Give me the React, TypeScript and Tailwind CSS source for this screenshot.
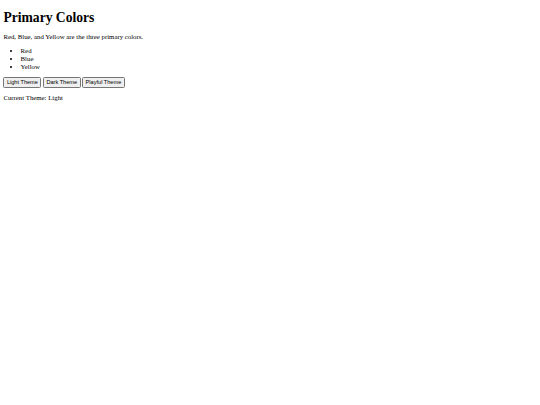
import React, { useState } from 'react';

const colors = ['Red', 'Blue', 'Yellow'];
const themes = ['Light', 'Dark', 'Playful'];

export default function App() {
  const [theme, setTheme] = useState('Light');

  return (
    <div className="min-h-[405px] bg-white p-[3.4px] text-black" style={{ fontFamily: '"Liberation Serif", serif' }}>
      <h1 className="mt-[6.6px] mb-[7.6px] text-[13.6px] leading-[15.5px] font-bold">Primary Colors</h1>
      <p className="my-[6.7px] text-[6.8px] leading-[7.5px]">Red, Blue, and Yellow are the three primary colors.</p>
      <ul className="mt-[6.9px] mb-[6.4px] list-disc pl-[17.2px] text-[6.8px] leading-[7.6px]">
        {colors.map((c) => (
          <li key={c}>{c}</li>
        ))}
      </ul>
      <div className="flex gap-[1.5px]">
        {themes.map((t) => (
          <button
            key={t}
            onClick={() => setTheme(t)}
            className="rounded-[1.5px] border-[0.5px] border-[#767676] bg-[#efefef] px-[2.5px] py-[1.3px] text-[5.6px] leading-[6.5px] text-black"
            style={{ fontFamily: '"Liberation Sans", Arial, sans-serif' }}
          >
            {t} Theme
          </button>
        ))}
      </div>
      <p className="mt-[6.3px] mb-[6.7px] text-[6.8px] leading-[7.5px]">Current Theme: {theme}</p>
    </div>
  );
}
